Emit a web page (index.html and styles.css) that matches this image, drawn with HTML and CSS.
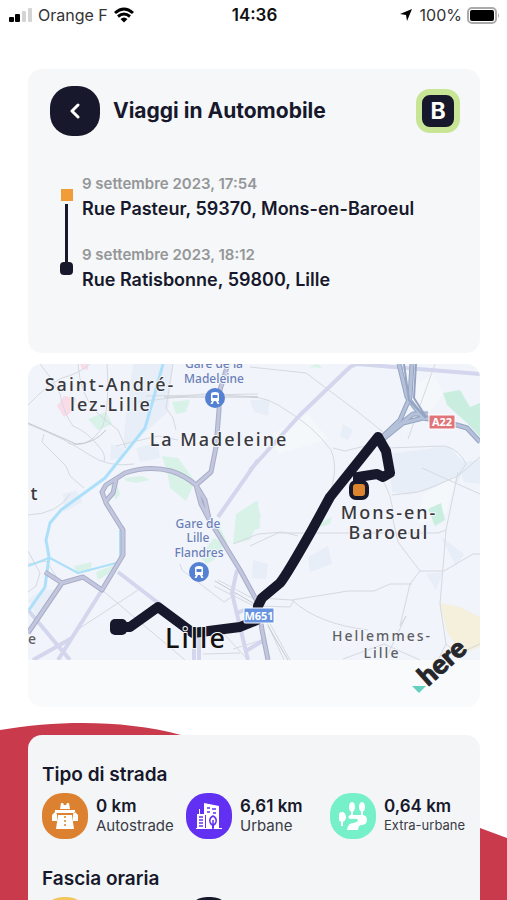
FILE: index.html
```
<!DOCTYPE html>
<html lang="it">

<head>
    <meta charset="UTF-8">
    <meta name="viewport" content="width=device-width, initial-scale=1.0">
    <title>Viaggi in Automobile</title>
    <link rel="stylesheet" href="styles.css">
</head>

<body>
    <!-- Status bar -->
    <div class="status-bar">
        <div class="status-left">
            <svg class="signal" viewBox="0 0 24 14" width="24" height="14">
                <rect x="0" y="9" width="5" height="5" rx="1" />
                <rect x="6" y="6" width="5" height="8" rx="1" />
                <rect class="off" x="13" y="3" width="4" height="11" rx="1" />
                <rect class="off" x="19" y="0" width="4" height="14" rx="1" />
            </svg>
            <span>Orange F</span>
            <svg class="wifi" viewBox="0 0 22 16" width="22" height="16">
                <path d="M2 6Q11 -2 20 6M5 9.500Q11 4.500 17 9.500" />
                <path class="dot" d="M7.500 12Q11 9 14.500 12L11 15.500Z" />
            </svg>
        </div>
        <span class="clock">14:36</span>
        <div class="status-right">
            <svg class="location" viewBox="0 0 12 12" width="12" height="12">
                <path d="M12 0L7 12L6 6L0 5Z" />
            </svg>
            <span>100%</span>
            <svg class="battery" viewBox="0 0 33 17" width="33" height="17">
                <rect class="case" x="1" y="1" width="28" height="15" rx="4" />
                <rect x="3" y="3" width="24" height="11" rx="2" />
                <path class="cap" d="M31 6Q33 8.500 31 11Z" />
            </svg>
        </div>
    </div>

    <main>
        <!-- Trip summary -->
        <section class="card trip">
            <header class="trip-header">
                <button class="back" type="button" aria-label="Indietro">
                    <svg viewBox="0 0 10 16" width="10" height="16">
                        <path d="M8 2L2 8L8 14" />
                    </svg>
                </button>
                <h1>Viaggi in Automobile</h1>
                <span class="score">B</span>
            </header>
            <div class="timeline">
                <div class="track">
                    <span class="from"></span>
                    <span class="line"></span>
                    <span class="to"></span>
                </div>
                <ol class="stops">
                    <li>
                        <time datetime="2023-09-09T17:54">9 settembre 2023, 17:54</time>
                        <p>Rue Pasteur, 59370, Mons-en-Baroeul</p>
                    </li>
                    <li>
                        <time datetime="2023-09-09T18:12">9 settembre 2023, 18:12</time>
                        <p>Rue Ratisbonne, 59800, Lille</p>
                    </li>
                </ol>
            </div>
        </section>

        <!-- Map -->
        <section class="map-card">
            <svg class="map" viewBox="0 0 452 343">
                <defs>
                    <clipPath id="tiles">
                        <rect width="452" height="296" />
                    </clipPath>
                </defs>
                <g clip-path="url(#tiles)">
                    <rect class="land" width="452" height="296" />

                    <path class="block" d="M105 0H145L140 48L115 70L95 85L98 50ZM83 80L96 84L95 94L82 96ZM35 130L48 126L55 138L36 148ZM222 36H242L240 52L226 48ZM360 90L420 82L438 100L430 118L380 131L364 128ZM430 100L452 95V120L436 118ZM280 193L300 182L304 200L282 208ZM398 210L415 208L408 226ZM412 172L436 190L428 202ZM315 60L325 66L320 76L312 72ZM0 236L15 225L28 226L8 252ZM225 196L240 200L238 215L224 214ZM108 84L130 78L132 94L112 98Z" />
                    <path class="pale" d="M388 20L406 10L415 30L402 48L388 40ZM245 70L280 50L300 75L250 90ZM395 130L428 112L418 150L390 160Z" />
                    <path class="green" d="M415 29L432 26L442 43L452 39V73L439 59L419 41ZM400 145L413 139L417 156L407 162Z" />
                    <path class="green faint" d="M60 55L78 48L84 60L70 66ZM144 38L162 36L158 48L148 50ZM82 116L88 118L92 130L88 136L84 128ZM96 114L114 112L122 116L108 119L98 117ZM134 92L150 94L166 116L164 124L158 137L142 124L140 112ZM46 202L64 198L62 208L48 208ZM68 208L86 201L80 210L70 216ZM208 150L228 137L233 152L222 176L205 180ZM172 192L186 174L196 180L186 196L178 200ZM289 160L304 153L302 160L292 163ZM182 160L192 163L200 180L188 172ZM280 3L290 0L294 4ZM222 144L230 136L232 164L222 168Z" />
                    <path class="pink" d="M29 42L36 32L48 34L44 48L36 53ZM52 0H60V6L54 5Z" />
                    <path class="sand" d="M412 239L432 243L452 253V283L435 290L419 269Z" />

                    <!-- Minor streets -->
                    <path class="street" d="M0 41Q20 20 34 14Q50 10 62 0M12 0Q25 15 32 30Q36 50 45 62Q60 68 72 84Q78 90 76 98M50 0Q52 30 68 48Q80 58 90 66L98 84M79 0Q82 38 75 62Q60 86 40 79M0 60Q40 76 60 90T106 100M16 70L14 78L38 102L42 112L56 124M0 151Q30 150 42 130M88 82L130 72L150 76M145 0L138 44L145 54L148 66M118 32L230 30M110 38L175 30L230 33" />
                    <path class="street" d="M222 33Q240 33 258 46Q285 62 303 86Q308 98 306 112L302 133M222 3L278 9L330 48L340 56L355 68M305 84L317 87L345 80M359 84L417 82Q432 86 438 100L430 112L452 93M430 112Q400 125 390 128L364 131M350 110Q366 130 365 156L370 178L392 207H416L445 190H452M392 207L382 220L372 262L378 252L360 290M222 182L250 169H410L418 166L430 108M418 166L412 240L418 280L408 300M233 234L264 236L320 227H346L362 220H384M264 236Q290 260 340 266M230 242L262 243L266 236M315 295L356 280L392 296M418 280L430 290L452 280M380 75L407 0M394 104L452 130" />
                    <path class="street" d="M74 226L157 296M49 266L110 226M0 200L18 197L30 215M0 187L12 209L8 222L0 228M190 216L224 234M152 200L154 206L196 238L208 230M186 222L226 242M175 290L212 289M196 270L220 296M205 180L230 170L255 168L270 172M240 256L262 296M236 252L256 296M205 285L234 276" />
                    <path class="rail" d="M0 59Q30 72 48 80Q66 80 78 66M136 33L230 33M187 217L230 242M240 262L260 296" />

                    <!-- Main roads -->
                    <path class="avenue" d="M230 96L190 153M222 106L272 51L322 3L329 0L452 10M42 296L0 246M5 296L44 274M30 296L74 226M90 208L129 238L165 269M166 296V273M171 296V273M209 206L204 229L220 296M207 250L216 246M218 287L236 276" />

                    <!-- Waterways -->
                    <path class="canal" d="M135 0L127 29L117 64L77 114L33 146L22 159L18 176L21 193L17 223L1 246" />
                    <path class="canal thin" d="M22 194L50 209L92 198V166M0 202L21 194" />

                    <!-- Motorways -->
                    <path class="motorway-edge" d="M200 0L191 29V46L188 83L183 108L168 121M0 269L34 219L55 213L74 226L95 191L95 166L93 163L78 139L74 128L78 121L97 109Q120 101 143 107Q156 111 168 121L177 136L182 159M88 116L85 129L78 137M168 121L173 140L182 157L212 206L230 239L234 266L240 296M17 208L34 219" />
                    <path class="motorway" d="M200 0L191 29V46L188 83L183 108L168 121M0 269L34 219L55 213L74 226L95 191L95 166L93 163L78 139L74 128L78 121L97 109Q120 101 143 107Q156 111 168 121L177 136L182 159M88 116L85 129L78 137M168 121L173 140L182 157L212 206L230 239L234 266L240 296M17 208L34 219" />
                    <path class="highway-edge" d="M371 0L379 33L395 54L422 59L439 64L452 78M384 0L382 33L372 56L353 74M395 54L375 59L354 76M400 50L385 50L360 70" />
                    <path class="highway" d="M371 0L379 33L395 54L422 59L439 64L452 78M384 0L382 33L372 56L353 74M395 54L375 59L354 76M400 50L385 50L360 70" />
                    <path class="junction" d="M376 0L381 36L398 54M388 0L386 34L398 53" />
                </g>

                <!-- Route -->
                <path class="route" d="M90 263H102L130 243L165 269L212 263L229 256L230 242L234 234L252 219Q258 212 284 166L302 133L350 73L358 87L362 109L355 113L349 110L330 113V126" />
                <rect class="route-end" x="82" y="255" width="17" height="16" rx="5" />
                <rect class="route-start" x="323" y="118" width="16" height="16" rx="5" />

                <!-- Places -->
                <g class="town">
                    <text x="82" y="27">Saint-André-</text>
                    <text x="83" y="47">lez-Lille</text>
                    <text x="191" y="82">La Madeleine</text>
                    <text x="361" y="155">Mons-en-</text>
                    <text x="361" y="175">Baroeul</text>
                    <text x="7" y="136">t</text>
                </g>
                <g class="suburb">
                    <text x="354" y="277">Hellemmes-</text>
                    <text x="354" y="294">Lille</text>
                    <text x="5" y="280">e</text>
                </g>
                <text class="city" x="168" y="284">Lille</text>
                <g class="station">
                    <text x="186" y="4">Gare de la</text>
                    <text x="186" y="19">Madeleine</text>
                    <text x="170" y="164">Gare de</text>
                    <text x="170" y="178">Lille</text>
                    <text x="171" y="193">Flandres</text>
                </g>
                <g class="stop">
                    <circle cx="187" cy="34" r="10" />
                    <path d="M183 30Q183 28 187 28T191 30V37H183ZM184.500 31V34H189.500V31ZM184 37H186L184.500 40H182.500ZM188 37H190L191.500 40H189.500Z" />
                </g>
                <g class="stop">
                    <circle cx="171" cy="208" r="10" />
                    <path d="M167 204Q167 202 171 202T175 204V211H167ZM168.500 205V208H173.500V205ZM168 211H170L168.500 214H166.500ZM172 211H174L175.500 214H173.500Z" />
                </g>
                <g class="shield">
                    <rect class="red" x="401" y="51" width="26" height="14" rx="1" />
                    <text x="414" y="62">A22</text>
                    <rect class="blue" x="216" y="244" width="30" height="15" rx="1" />
                    <text x="231" y="256">M651</text>
                </g>

                <!-- Map provider -->
                <path class="here-mark" d="M384 322H398L391 329Z" />
                <text class="here" transform="translate(400 323) rotate(-42)">here</text>
            </svg>
        </section>

        <!-- Statistics -->
        <section class="stats">
            <svg class="wave" viewBox="0 0 507 178" preserveAspectRatio="none">
                <path d="M0 8C60 -2 125 -2 181 13C290 42 380 78 480 106L507 116V178H0Z" />
            </svg>
            <div class="card stats-card">
                <h2>Tipo di strada</h2>
                <ul class="metrics">
                    <li>
                        <span class="icon orange">
                            <svg viewBox="0 0 28 28" width="28" height="28">
                                <path d="M10 1H12L13 3H15L16 1H18L19 7H9ZM4 8H24V11H4ZM1 13L4 10L6 12V19H1ZM27 13L24 10L22 12V19H27ZM7 13H21L23 27H5Z" />
                                <path class="cut" d="M14 14V16M14 18V20M14 22V24M2 20H5M23 20H26" />
                            </svg>
                        </span>
                        <div>
                            <strong>0 km</strong>
                            <span>Autostrade</span>
                        </div>
                    </li>
                    <li>
                        <span class="icon purple">
                            <svg viewBox="0 0 28 28" width="28" height="28">
                                <path d="M9 1L24 4V26H19V23H17V26H11V13H9ZM4 7H5V12H10V26H2V12H4ZM1 26H27V27H1Z" />
                                <path class="cut" d="M12 6H15M17 7H21M12 10H15M18 11H21M4 15H8M4 18H8M4 21H8M4 24H8" />
                                <path class="tree" d="M18 14Q22 16 21 20Q20 23 18 23T15 20Q14 16 18 14ZM18 18V27" />
                            </svg>
                        </span>
                        <div>
                            <strong>6,61 km</strong>
                            <span>Urbane</span>
                        </div>
                    </li>
                    <li>
                        <span class="icon mint">
                            <svg viewBox="0 0 28 28" width="28" height="28">
                                <ellipse cx="3" cy="15" rx="4" ry="5" />
                                <ellipse cx="13" cy="5" rx="3" ry="5" />
                                <ellipse cx="23" cy="5" rx="3" ry="5" />
                                <path d="M2 18H4V24H2ZM12 9H14V13H12ZM22 9H24V14H22ZM11 13H23Q28 13 28 18Q28 23 22 23Q19 24 19 28H8Q9 21 14 21Q19 20 19 18Q18 16 12 17Q7 16 11 13Z" />
                            </svg>
                        </span>
                        <div>
                            <strong>0,64 km</strong>
                            <span class="small">Extra-urbane</span>
                        </div>
                    </li>
                </ul>
                <h2>Fascia oraria</h2>
                <ul class="metrics">
                    <li><span class="icon yellow"></span></li>
                    <li><span class="icon navy"></span></li>
                </ul>
            </div>
        </section>
    </main>
</body>

</html>
```

FILE: styles.css
```
* {
    box-sizing: border-box;
}

body {
    font-family: Inter, 'Liberation Sans', sans-serif;
    color: #17182b;
    background-color: #fff;
    height: 100vh;
    margin: 0;
    overflow: hidden;
}

h1, h2, p, ul, ol {
    margin: 0;
    padding: 0;
}

ul, ol {
    list-style: none;
}

/* Status bar */
.status-bar {
    display: grid;
    grid-template-columns: 1fr auto 1fr;
    align-items: center;
    height: 30px;
    padding: 0 7px 0 9px;
    font-size: 16px;
    color: #333;
}

.status-left,
.status-right {
    display: flex;
    align-items: center;
    gap: 5px;
}

.status-right {
    justify-content: flex-end;
}

.clock {
    font-size: 17px;
    font-weight: 600;
    color: #111;
}

.signal .off {
    fill: #d4d4d4;
}

.wifi path {
    fill: none;
    stroke: #000;
    stroke-width: 3;
}

.wifi .dot {
    fill: #000;
    stroke: none;
}

.location {
    margin-right: 3px;
}

.battery .case {
    fill: none;
    stroke: #aaa;
    stroke-width: 2;
}

.battery .cap {
    fill: #aaa;
}

/* Cards */
main {
    padding-top: 39px;
}

.card {
    background-color: #f5f7f9;
    border-radius: 14px;
    margin: 0 27px 0 28px;
}

.trip {
    padding: 17px 20px 58px 22px;
}

.trip-header {
    display: flex;
    align-items: center;
    gap: 13px;
}

.trip-header h1 {
    flex: 1;
    font-size: 21px;
    font-weight: 700;
    line-height: 30px;
}

.back {
    display: flex;
    align-items: center;
    justify-content: center;
    width: 50px;
    height: 50px;
    padding: 0;
    border: none;
    border-radius: 22px;
    background-color: #17182b;
    cursor: pointer;
}

.back path {
    fill: none;
    stroke: #fff;
    stroke-width: 3;
    stroke-linecap: round;
    stroke-linejoin: round;
}

.score {
    display: flex;
    align-items: center;
    justify-content: center;
    width: 44px;
    height: 44px;
    border: 6px solid #c8e595;
    border-radius: 14px;
    background-color: #17182b;
    color: #fff;
    font-size: 23px;
    font-weight: 700;
}

/* Timeline */
.timeline {
    display: flex;
    gap: 9px;
    padding-left: 10px;
    margin-top: 38px;
}

.track {
    display: flex;
    flex-direction: column;
    align-items: center;
    width: 13px;
    padding: 15px 0 20px;
}

.from {
    width: 12px;
    height: 12px;
    background-color: #f09c38;
}

.line {
    flex: 1;
    width: 3px;
    margin-top: 3px;
    background-color: #17182b;
}

.to {
    width: 13px;
    height: 13px;
    border-radius: 4px;
    background-color: #17182b;
}

.stops {
    display: flex;
    flex-direction: column;
    gap: 21px;
}

.stops time {
    display: block;
    font-size: 15px;
    font-weight: 600;
    line-height: 20px;
    color: #949698;
}

.stops p {
    font-size: 18px;
    font-weight: 600;
    line-height: 30px;
}

/* Map */
.map-card {
    margin: 11px 27px 15px 28px;
    border-radius: 14px;
    background-color: #f9fafc;
    overflow: hidden;
}

.map {
    display: block;
    width: 100%;
    font-family: 'Noto Sans', 'Open Sans', sans-serif;
}

.land {
    fill: #f1f4fa;
}

.block {
    fill: #e8eef8;
}

.pale {
    fill: #f5f8fa;
}

.green {
    fill: #c9eee0;
}

.green.faint {
    fill: #d8f2e8;
}

.pink {
    fill: #f8dce8;
}

.sand {
    fill: #f4f0dc;
}

.street,
.rail,
.avenue,
.canal,
.motorway-edge,
.motorway,
.highway-edge,
.highway,
.junction,
.route {
    fill: none;
    stroke-linejoin: round;
}

.street {
    stroke: #d5d9e0;
    stroke-width: 1;
}

.rail {
    stroke: #c4c7cf;
    stroke-width: 1;
}

.avenue {
    stroke: #d3d6ed;
    stroke-width: 4;
}

.canal {
    stroke: #ace0fa;
    stroke-width: 3;
}

.canal.thin {
    stroke-width: 2;
}

.motorway-edge {
    stroke: #a9adc6;
    stroke-width: 5;
}

.motorway {
    stroke: #c2c6df;
    stroke-width: 3;
}

.highway-edge {
    stroke: #94a4c2;
    stroke-width: 5;
}

.highway {
    stroke: #b4c1d9;
    stroke-width: 3;
}

.junction {
    stroke: #94a4c2;
    stroke-width: 2;
}

.route {
    stroke: #17182b;
    stroke-width: 10;
    stroke-linecap: round;
}

.route-end {
    fill: #17182b;
}

.route-start {
    fill: #dd852e;
    stroke: #17182b;
    stroke-width: 4;
}

.map text {
    text-anchor: middle;
    paint-order: stroke;
    stroke: #f4f6fb;
    stroke-width: 2;
    stroke-linejoin: round;
}

.town text {
    font-size: 18px;
    font-weight: 500;
    letter-spacing: 2px;
    fill: #38393e;
}

.suburb text {
    font-size: 14px;
    font-weight: 500;
    letter-spacing: 2px;
    fill: #5d5f66;
}

.map .city {
    font-size: 27px;
    font-weight: 500;
    letter-spacing: 2px;
    fill: #111;
}

.station text {
    font-size: 12px;
    font-weight: 500;
    fill: #6a7fb8;
}

.stop circle {
    fill: #5581d2;
}

.stop path {
    fill: #fff;
    fill-rule: evenodd;
}

.shield rect {
    stroke: #fff;
    stroke-width: 1;
}

.shield .red {
    fill: #e07479;
}

.shield .blue {
    fill: #6794e0;
}

.shield text {
    font-size: 11px;
    font-weight: 700;
    fill: #fff;
    stroke: none;
}

.here-mark {
    fill: #65cfc0;
}

.map .here {
    font-family: Lato, sans-serif;
    font-size: 27px;
    font-weight: 900;
    text-anchor: start;
    fill: #26272b;
    stroke: #26272b;
    stroke-width: 1;
}

/* Statistics */
.stats {
    display: grid;
}

.wave,
.stats-card {
    grid-area: 1 / 1;
}

.wave {
    width: 100%;
    height: 178px;
    fill: #c93a4d;
}

.stats-card {
    margin-top: 13px;
    padding: 27px 6px 27px 14px;
    background-color: #f3f5f7;
}

.stats-card h2 {
    font-size: 19px;
    font-weight: 600;
    line-height: 26px;
}

.metrics {
    display: grid;
    grid-template-columns: repeat(3, 1fr);
    margin: 5px 0 27px;
}

.metrics li {
    display: flex;
    align-items: center;
    gap: 8px;
}

.metrics strong,
.metrics div span {
    display: block;
    line-height: 19px;
    white-space: nowrap;
}

.metrics strong {
    font-size: 17px;
    font-weight: 600;
}

.metrics div span {
    font-size: 15px;
    color: #3a3b45;
}

.metrics div .small {
    font-size: 13px;
}

.icon {
    display: flex;
    align-items: center;
    justify-content: center;
    flex-shrink: 0;
    width: 46px;
    height: 46px;
    border-radius: 21px;
}

.icon svg {
    fill: #fff;
}

.icon .cut,
.icon .tree {
    fill: none;
    stroke-width: 1.5;
}

.orange {
    background-color: #db812f;
}

.orange .cut {
    stroke: #db812f;
}

.purple {
    background-color: #6230f2;
}

.purple .cut {
    stroke: #6230f2;
}

.purple .tree {
    fill: #fff;
    stroke: #6230f2;
}

.mint {
    background-color: #76f0c8;
}

.yellow {
    background-color: #f1c75c;
}

.navy {
    background-color: #17182b;
}
```
